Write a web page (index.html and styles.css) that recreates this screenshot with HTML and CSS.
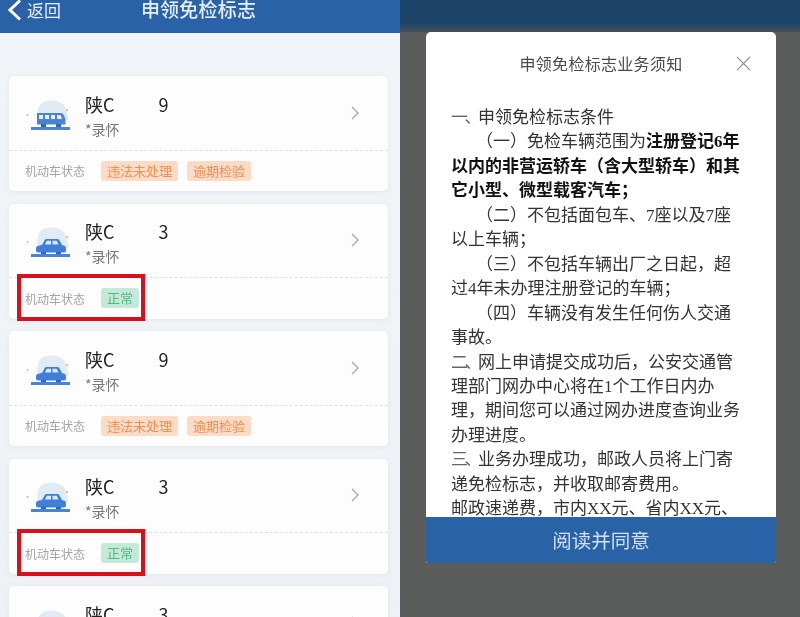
FILE: index.html
```html
<!DOCTYPE html>
<html lang="zh-CN">
<head>
<meta charset="utf-8">
<title>申领免检标志</title>
<link rel="stylesheet" href="styles.css">
</head>
<body>
<svg class="defs" width="0" height="0" aria-hidden="true">
  <symbol id="scene" viewBox="0 0 46 34">
    <path d="M13 24C11 15 13 9 19 6c4-2 11-2 15 0 6 2 9 8 9 18z" fill="#e1ebf3"/>
    <circle cx="2.500" cy="19" r="1" fill="#a9bccb"/>
    <circle cx="42" cy="14" r="1.100" fill="#a9bccb"/>
    <rect x="6" y="31" width="39" height="3" fill="#4a83d4"/>
  </symbol>
  <symbol id="bus" viewBox="0 0 46 34">
    <use href="#scene"/>
    <path d="M12 17h24c2.500 0 4 4 4.500 8v3.500H12z" fill="#4a83d4"/>
    <path d="M14 19h4v4h-4zM20 19h4v4h-4zM26 19h4v4h-4zM32 19h3.500l1.500 4h-5z" fill="#e8f1fa"/>
    <rect x="16" y="28" width="5" height="3" fill="#2f66b8"/>
    <rect x="31" y="28" width="5" height="3" fill="#2f66b8"/>
  </symbol>
  <symbol id="car" viewBox="0 0 46 34">
    <use href="#scene"/>
    <path d="M17 22l2.500-4.500c.5-1 1-1.500 2-1.500h11c1 0 1.500.5 2 1.500L37 22c2.500.5 4 1 4 3.500v2c0 1-1 2-2 2H13c-1 0-2-1-2-2v-2c0-2.500 2-3 6-3.500z" fill="#3f7fdc"/>
    <path d="M20 21.500l1.800-3.700h4.200v3.700zM27.500 17.800h4.200l1.800 3.700h-6z" fill="#dce9f5"/>
    <rect x="16" y="29" width="5" height="2" fill="#2f66b8"/>
    <rect x="31" y="29" width="5" height="2" fill="#2f66b8"/>
  </symbol>
  <symbol id="chev" viewBox="0 0 10 16">
    <path d="M2 2l6 6-6 6" fill="none" stroke="#a3a6a9" stroke-width="1.300"/>
  </symbol>
</svg>
<main class="page">
  <section class="list-panel">
    <header class="nav">
      <div class="back">
        <svg class="back-icon" viewBox="0 0 14 22"><path d="M13 1.500L3 11l10 9.500" fill="none" stroke="#fff" stroke-width="3"/></svg>
        <span>返回</span>
      </div>
      <h1 class="nav-title">申领免检标志</h1>
    </header>
    <div class="cards">
      <article class="card">
        <div class="card-top">
          <svg class="veh"><use href="#bus"/></svg>
          <div class="info">
            <div class="plate">陕C<span class="tail">9</span></div>
            <div class="owner">*录怀</div>
          </div>
          <svg class="chev"><use href="#chev"/></svg>
        </div>
        <div class="card-bottom">
          <span class="label">机动车状态</span>
          <span class="tag warn">违法未处理</span>
          <span class="tag warn">逾期检验</span>
        </div>
      </article>
      <article class="card">
        <div class="card-top">
          <svg class="veh"><use href="#car"/></svg>
          <div class="info">
            <div class="plate">陕C<span class="tail">3</span></div>
            <div class="owner">*录怀</div>
          </div>
          <svg class="chev"><use href="#chev"/></svg>
        </div>
        <div class="card-bottom">
          <span class="label">机动车状态</span>
          <span class="tag ok">正常</span>
        </div>
        <div class="mark"></div>
      </article>
      <article class="card">
        <div class="card-top">
          <svg class="veh"><use href="#car"/></svg>
          <div class="info">
            <div class="plate">陕C<span class="tail">9</span></div>
            <div class="owner">*录怀</div>
          </div>
          <svg class="chev"><use href="#chev"/></svg>
        </div>
        <div class="card-bottom">
          <span class="label">机动车状态</span>
          <span class="tag warn">违法未处理</span>
          <span class="tag warn">逾期检验</span>
        </div>
      </article>
      <article class="card">
        <div class="card-top">
          <svg class="veh"><use href="#car"/></svg>
          <div class="info">
            <div class="plate">陕C<span class="tail">3</span></div>
            <div class="owner">*录怀</div>
          </div>
          <svg class="chev"><use href="#chev"/></svg>
        </div>
        <div class="card-bottom">
          <span class="label">机动车状态</span>
          <span class="tag ok">正常</span>
        </div>
        <div class="mark"></div>
      </article>
      <article class="card">
        <div class="card-top">
          <svg class="veh"><use href="#car"/></svg>
          <div class="info">
            <div class="plate">陕C<span class="tail">3</span></div>
            <div class="owner">*录怀</div>
          </div>
          <svg class="chev"><use href="#chev"/></svg>
        </div>
      </article>
    </div>
  </section>
  <section class="notice-panel">
    <div class="dim-nav"></div>
    <div class="modal">
      <div class="modal-head">
        <h2 class="modal-title">申领免检标志业务须知</h2>
        <svg class="close" viewBox="0 0 16 16"><path d="M1 1l14 14M15 1L1 15" stroke="#8d8d8d" stroke-width="1.300" fill="none"/></svg>
      </div>
      <div class="modal-body">
        <p><span class="num">一、</span>申领免检标志条件</p>
        <p class="indent">（一）免检车辆范围为<b>注册登记6年<br>以内的非营运轿车（含大型轿车）和其<br>它小型、微型载客汽车；</b></p>
        <p class="indent">（二）不包括面包车、7座以及7座<br>以上车辆；</p>
        <p class="indent">（三）不包括车辆出厂之日起，超<br>过4年未办理注册登记的车辆；</p>
        <p class="indent">（四）车辆没有发生任何伤人交通<br>事故。</p>
        <p><span class="num">二、</span>网上申请提交成功后，公安交通管<br>理部门网办中心将在1个工作日内办<br>理，期间您可以通过网办进度查询业务<br>办理进度。</p>
        <p><span class="num">三、</span>业务办理成功，邮政人员将上门寄<br>递免检标志，并收取邮寄费用。</p>
        <p>邮政速递费，市内XX元、省内XX元、<br>省外XX元。</p>
      </div>
      <button class="agree" type="button">阅读并同意</button>
    </div>
  </section>
</main>
</body>
</html>
```
FILE: styles.css
```css
* { box-sizing: border-box; }
html, body { margin: 0; height: 617px; overflow: hidden; }
body { font-family: "Noto Sans CJK SC", "Noto Sans", sans-serif; color: #333; }
.defs { position: absolute; }
.page { display: flex; width: 800px; height: 617px; filter: blur(.35px); }

.list-panel { width: 400px; height: 617px; overflow: hidden; background: linear-gradient(#f1f4f8, #eef2f6); }
.nav { position: relative; height: 33px; background: #2a62a8; color: #e6eff8; display: flex; align-items: center; justify-content: center; }
.back { position: absolute; left: 7px; top: 0; height: 20px; display: flex; align-items: center; gap: 6px; font-size: 17px; line-height: 20px; }
.back-icon { width: 14px; height: 22px; }
.nav-title { margin: -16px 0 0 -3px; font-size: 19px; font-weight: 500; line-height: 20px; letter-spacing: .2px; }

.cards { padding: 43px 12px 0 9px; display: flex; flex-direction: column; gap: 12.500px; }
.card { position: relative; height: 115px; flex: none; background: #fdfdfe; border-radius: 5px; box-shadow: 0 1px 5px rgba(190, 200, 215, .25); }
.card-top { height: 74.500px; display: flex; align-items: center; padding: 0 28px 0 16px; border-bottom: 1px dashed #dfe1e3; }
.veh { width: 46px; height: 34px; flex: none; }
.info { margin-left: 14px; flex: 1; padding-top: 8px; }
.plate { font-size: 18px; line-height: 24px; color: #222; }
.tail { margin-left: 44px; }
.owner { font-size: 14px; line-height: 26px; color: #777; }
.chev { width: 10px; height: 16px; flex: none; }
.card-bottom { display: flex; align-items: center; gap: 9px; height: 40px; padding-left: 16px; }
.label { font-size: 12px; color: #a2a5a8; margin-right: 7px; width: 60px; white-space: nowrap; }
.tag { height: 20px; line-height: 20px; padding: 0 6px; border-radius: 3px; font-size: 13px; white-space: nowrap; }
.warn { background: #fcdcc6; color: #f0904f; }
.ok { background: #c6e8d9; color: #4cbb83; }
.mark { position: absolute; left: 8px; top: 70px; width: 128px; height: 47px; border: 4px solid #d8101c; pointer-events: none; }

.notice-panel { width: 400px; height: 617px; background: #5b5c5c; overflow: hidden; display: flex; flex-direction: column; }
.dim-nav { height: 32px; flex: none; background: linear-gradient(#1b4367 70%, #45505a); }
.modal { width: 350px; height: 531px; margin-left: 26px; background: #fff; border-radius: 5px 5px 2px 2px; display: flex; flex-direction: column; overflow: hidden; }
.modal-head { position: relative; flex: none; height: 74px; display: flex; justify-content: center; padding-top: 20px; }
.modal-title { margin: 0; font-size: 16px; font-weight: 400; line-height: 22px; color: #4a4a4a; letter-spacing: .3px; }
.close { position: absolute; right: 25px; top: 24px; width: 15px; height: 15px; }
.modal-body { flex: 1; min-height: 0; overflow: hidden; padding: 0 25px; font-family: "Liberation Serif", "Noto Sans CJK SC", serif; font-size: 17px; line-height: 24.450px; color: #333; white-space: nowrap; }
.modal-body p { margin: 0; }
.modal-body .indent { text-indent: 25px; }
.modal-body b { font-weight: 700; color: #111; }
.num { letter-spacing: -3.500px; color: #666; }
.agree { flex: none; height: 46px; border: 0; background: #2a62a8; color: #cfe0f3; font-family: inherit; font-size: 19.500px; padding: 0 0 2px; }
```
